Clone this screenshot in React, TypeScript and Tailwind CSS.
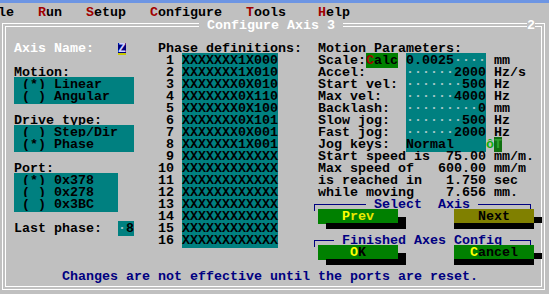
import React from 'react';

const PHASES = [
  'XXXXXXX1X000',
  'XXXXXXX1X010',
  'XXXXXXX0X010',
  'XXXXXXX0X110',
  'XXXXXXX0X100',
  'XXXXXXX0X101',
  'XXXXXXX0X001',
  'XXXXXXX1X001',
  'XXXXXXXXXXXX',
  'XXXXXXXXXXXX',
  'XXXXXXXXXXXX',
  'XXXXXXXXXXXX',
  'XXXXXXXXXXXX',
  'XXXXXXXXXXXX',
  'XXXXXXXXXXXX',
  'XXXXXXXXXXXX',
];

const PARAMS: Record<number, [string, string, string]> = {
  5: ['Accel:', '······2000', 'Hz/s'],
  6: ['Start vel:', '·······500', 'Hz'],
  7: ['Max vel:', '······4000', 'Hz'],
  8: ['Backlash:', '·········0', 'mm'],
  9: ['Slow jog:', '·······500', 'Hz'],
  10: ['Fast jog:', '······2000', 'Hz'],
};

// teal input text, leader dots drawn dim
const Field: React.FC<{ text: string }> = ({ text }) => (
  <span className="bg-[#008080] text-black">
    {text.split('').map((ch, i) =>
      ch === '·' ? (
        <span key={i} className="text-[#a8c8c8]">
          ·
        </span>
      ) : (
        <span key={i}>{ch}</span>
      ),
    )}
  </span>
);

const Radio: React.FC<{ text: string }> = ({ text }) => (
  <>
    {' '}
    <span className="bg-[#008080] text-black">{text}</span>
  </>
);

const Button: React.FC<{ hot: string; rest: string; pre: string; post: string; olive?: boolean; restYellow?: boolean }> = ({
  hot,
  rest,
  pre,
  post,
  olive,
  restYellow,
}) => (
  <span className={olive ? 'bg-[#808000] text-black' : 'bg-[#008000] text-black'}>
    {pre}
    <span className={olive ? 'text-black' : 'text-[#ffff00]'}>{hot}</span>
    <span className={restYellow ? 'text-[#e8e800]' : ''}>{rest}</span>
    {post}
  </span>
);

const RightShadow = () => <span className="inline-block w-[8px] h-[12px] align-top border-b-[6px] border-black" />;
const BottomShadow = () => <span className="inline-block w-[80px] h-[12px] align-top border-t-[6px] border-black" />;

const BoxTop: React.FC<{ label: string; left: number; right: number }> = ({ label, left, right }) => (
  <span className="inline-flex h-[12px] align-top">
    <span className="flex w-[8px]">
      <span className="ml-[4px] mt-[5px] h-[7px] flex-1 border-l border-t border-[#000080]" />
    </span>
    <span className="mt-[5px] border-t border-[#000080]" style={{ width: left }} />
    <span className="text-[#000080]">{label}</span>
    <span className="mt-[5px] border-t border-[#000080]" style={{ width: right }} />
    <span className="flex w-[8px]">
      <span className="mr-[3px] mt-[5px] h-[7px] flex-1 border-r border-t border-[#000080]" />
    </span>
  </span>
);

function leftCell(r: number): React.ReactNode {
  switch (r) {
    case 3:
      return (
        <>
          {' '}
          <span className="text-white">Axis Name:</span>
          {'   '}
          <span className="inline-block w-[8px] h-[12px] align-top bg-[#000080] text-[#d0d0ff] border-b-2 border-[#c8c800]">
            Z
          </span>
        </>
      );
    case 5:
      return ' Motion:';
    case 6:
      return <Radio text=" (*) Linear    " />;
    case 7:
      return <Radio text=" ( ) Angular   " />;
    case 9:
      return ' Drive type:';
    case 10:
      return <Radio text=" ( ) Step/Dir  " />;
    case 11:
      return <Radio text=" (*) Phase     " />;
    case 13:
      return ' Port:';
    case 14:
      return <Radio text=" (*) 0x378   " />;
    case 15:
      return <Radio text=" ( ) 0x278   " />;
    case 16:
      return <Radio text=" ( ) 0x3BC   " />;
    case 18:
      return (
        <>
          {' Last phase:  '}
          <Field text="·8" />
        </>
      );
    default:
      return null;
  }
}

function midCell(r: number): React.ReactNode {
  if (r === 3) return 'Phase definitions:';
  const i = r - 4;
  if (i < 0 || i >= PHASES.length) return null;
  return (
    <>
      {String(i + 1).padStart(2, ' ')}{' '}
      <Field text={PHASES[i]} />
    </>
  );
}

function rightCell(r: number): React.ReactNode {
  if (PARAMS[r]) {
    const [label, value, unit] = PARAMS[r];
    return (
      <>
        {' ' + label.padEnd(11, ' ')}
        <Field text={value} />
        {' ' + unit}
      </>
    );
  }
  switch (r) {
    case 3:
      return ' Motion Parameters:';
    case 4:
      return (
        <>
          {' Scale:'}
          <span className="bg-[#008000] text-black">
            <span className="text-[#a00000]">C</span>alc
          </span>{' '}
          <Field text="0.0025····" />
          {' mm'}
        </>
      );
    case 11:
      return (
        <>
          {' Jog keys:  '}
          <Field text="Normal    " />
          <span className="text-[#10b010]">ô</span>
          <span className="bg-[#107010] text-[#30a030]">T</span>
        </>
      );
    case 12:
      return ' Start speed is  75.00 mm/m.';
    case 13:
      return ' Max speed of   600.00 mm/m';
    case 14:
      return ' is reached in   1.750 sec';
    case 15:
      return ' while moving    7.656 mm.';
    case 16:
      return <BoxTop label=" Select  Axis " left={48} right={48} />;
    case 17:
      return (
        <>
          {' '}
          <Button pre="   " hot="P" rest="rev" post="   " restYellow />
          <RightShadow />
          {'      '}
          <Button pre="   " hot="N" rest="ext" post="   " olive />
          <RightShadow />
        </>
      );
    case 18:
      return (
        <>
          {'  '}
          <BottomShadow />
          {'      '}
          <BottomShadow />
        </>
      );
    case 19:
      return <BoxTop label=" Finished Axes Config " left={16} right={16} />;
    case 20:
      return (
        <>
          {' '}
          <Button pre="    " hot="O" rest="K" post="    " />
          <RightShadow />
          {'      '}
          <Button pre="  " hot="C" rest="ancel" post="  " />
          <RightShadow />
        </>
      );
    case 21:
      return (
        <>
          {'  '}
          <BottomShadow />
          {'      '}
          <BottomShadow />
        </>
      );
    default:
      return null;
  }
}

const App: React.FC = () => {
  const rows = Array.from({ length: 20 }, (_, k) => k + 2);

  return (
    <div className="w-[549px] h-[294px] overflow-hidden bg-[#c0c0c0] text-black font-['Liberation_Mono',monospace] text-[13.333px] leading-[12px] font-bold">
      <div className="h-[3px] bg-[#6d95e3]" />

      {/* menu bar */}
      <div className="mt-[4px] h-[12px] ml-[-2px] whitespace-pre">
        {'le   '}
        <span className="text-[#a00000]">R</span>un{'   '}
        <span className="text-[#a00000]">S</span>etup{'   '}
        <span className="text-[#a00000]">C</span>onfigure{'   '}
        <span className="text-[#a00000]">T</span>ools{'    '}
        <span className="text-[#a00000]">H</span>elp
      </div>

      {/* dialog frame */}
      <div className="relative mt-[4px] ml-[2px] w-[543px] border border-white p-[2px]">
        <span className="absolute top-[-4px] left-[196px] h-[12px] bg-[#c0c0c0] text-white whitespace-pre">
          {' Configure Axis 3 '}
        </span>
        <span className="absolute top-[-4px] left-[524px] h-[12px] bg-[#c0c0c0] text-white">2</span>

        <div className="border border-white pt-[4px] pb-[3px]">
          {rows.map((r) => (
            <div key={r} className="flex h-[12px] whitespace-pre">
              <div className="w-[152px] shrink-0">{leftCell(r)}</div>
              <div className="w-[152px] shrink-0">{midCell(r)}</div>
              <div className="flex-1">{rightCell(r)}</div>
            </div>
          ))}
          <div className="h-[12px] whitespace-pre text-[#000080]">
            {'       Changes are not effective until the ports are reset.'}
          </div>
        </div>
      </div>
    </div>
  );
};

export default App;
